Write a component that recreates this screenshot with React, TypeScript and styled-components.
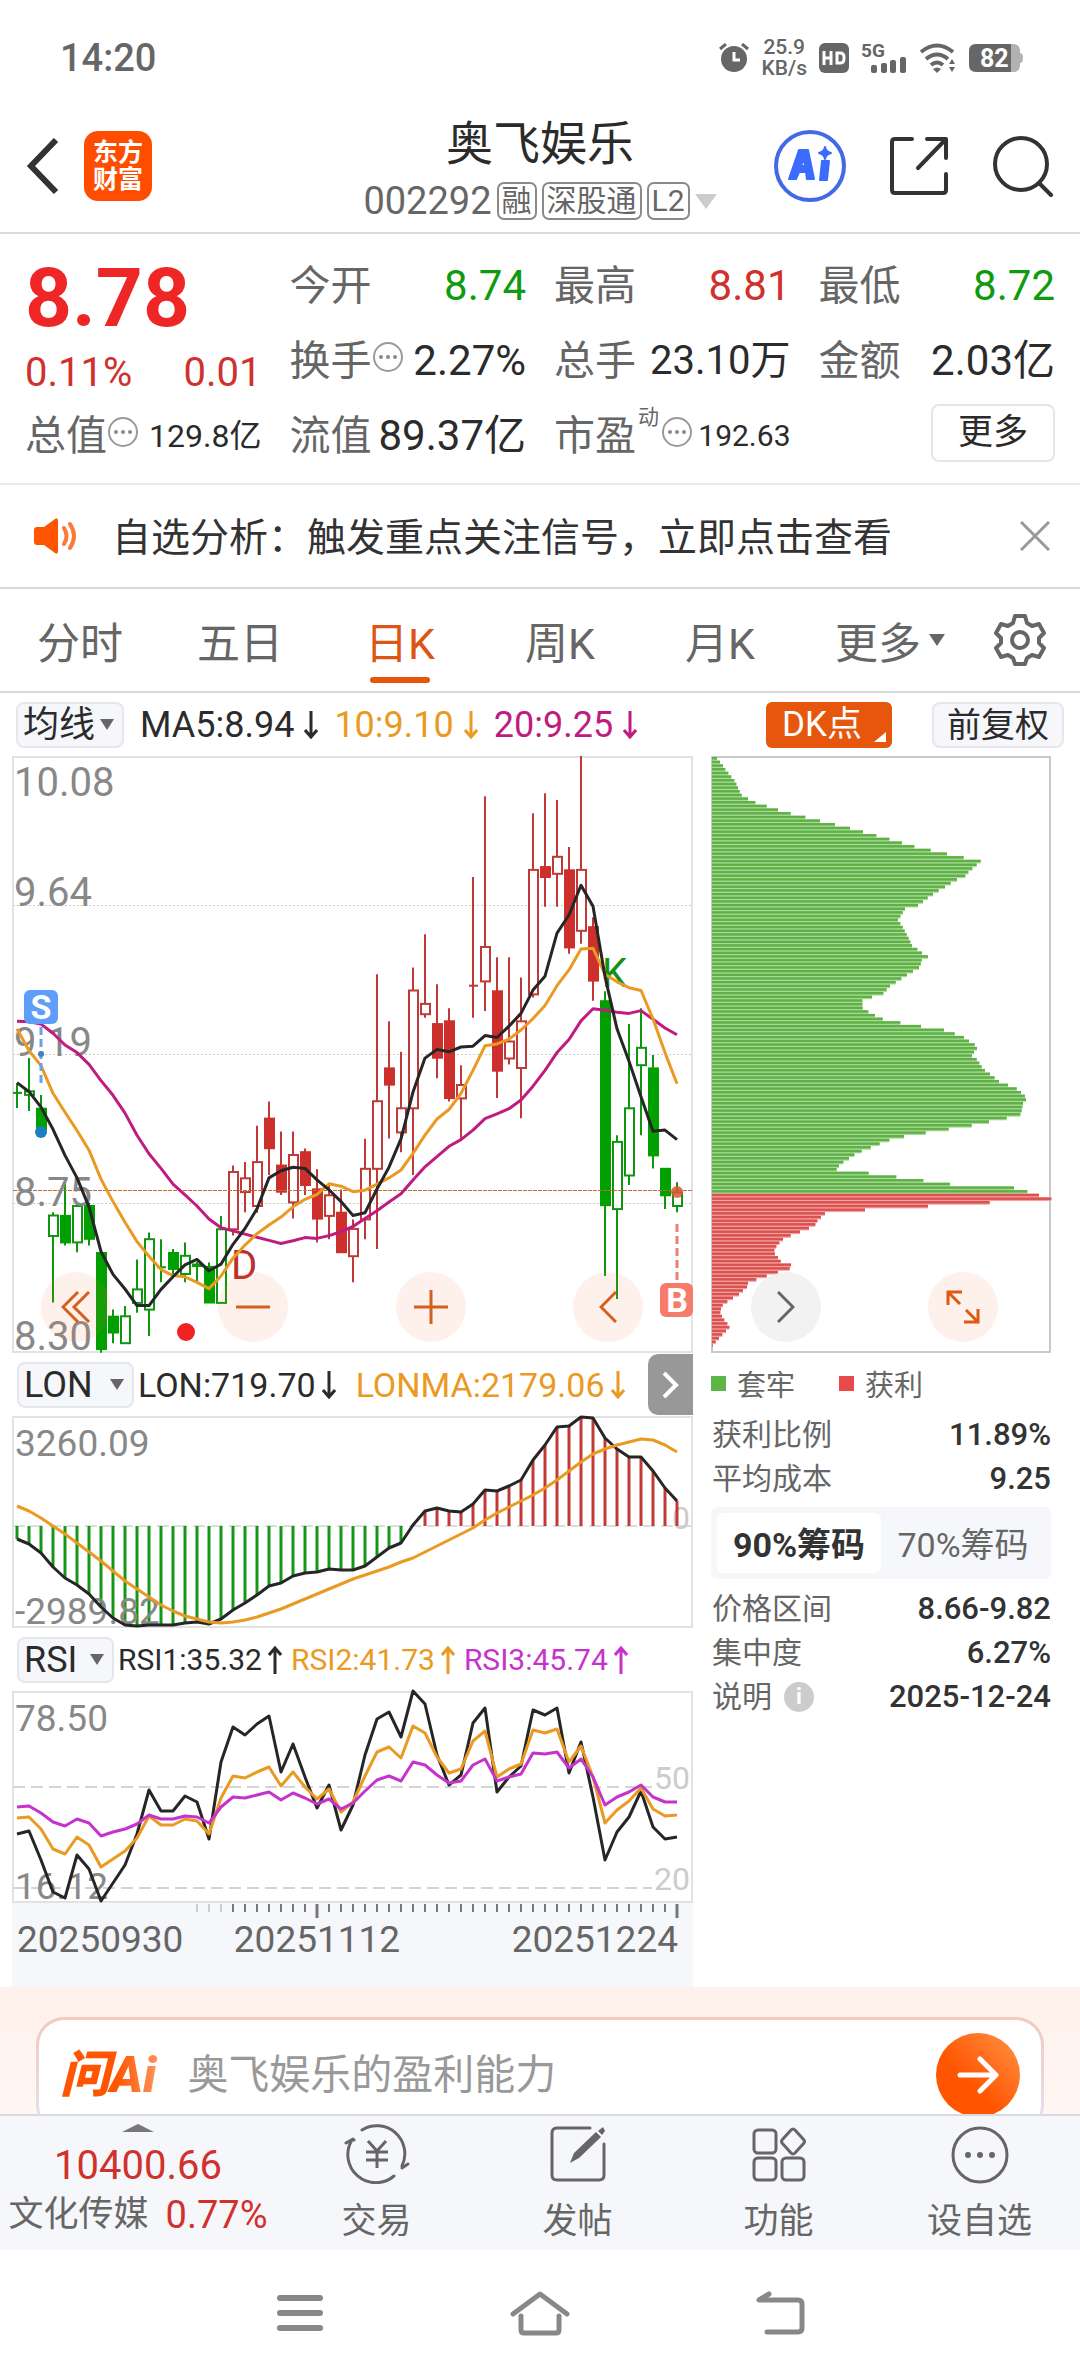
import React, { useState } from "react";
import styled, { createGlobalStyle } from "styled-components";

/* ---------- data ---------- */

type Candle = [kind: string, high: number, top: number, bottom: number, low: number];

// g/r: green or red, upper case: filled body. Levels are steps of the price axis, 40 = 10.08, 1547 = 8.30.
const candles: Candle[] = [
  ["g", 868, 892, 894, 930], ["g", 804, 888, 897, 938], ["G", 897, 932, 985, 995],
  ["g", 1194, 1202, 1254, 1422], ["G", 1118, 1203, 1270, 1278], ["g", 1170, 1178, 1270, 1295],
  ["G", 1170, 1178, 1261, 1278], ["G", 1297, 1297, 1540, 1549], ["G", 1440, 1458, 1498, 1525],
  ["g", 1431, 1457, 1525, 1525], ["g", 1313, 1389, 1423, 1448], ["g", 1245, 1262, 1440, 1507],
  ["g", 1262, 1333, 1335, 1371], ["G", 1287, 1297, 1337, 1352], ["g", 1270, 1304, 1350, 1371],
  ["g", 1320, 1326, 1330, 1371], ["G", 1321, 1332, 1422, 1422], ["g", 1203, 1237, 1423, 1423],
  ["r", 1076, 1092, 1237, 1253], ["r", 1067, 1108, 1143, 1194], ["r", 975, 1067, 1178, 1195],
  ["R", 914, 957, 1032, 1100], ["R", 990, 1076, 1142, 1150], ["r", 990, 1049, 1169, 1210],
  ["R", 1033, 1042, 1125, 1150], ["R", 1085, 1136, 1210, 1270], ["r", 1125, 1151, 1203, 1262],
  ["R", 1136, 1195, 1295, 1295], ["r", 1212, 1236, 1305, 1371], ["r", 1008, 1084, 1212, 1262],
  ["r", 592, 913, 1084, 1287], ["R", 711, 830, 871, 1007], ["r", 788, 931, 992, 1042],
  ["r", 575, 633, 931, 1100], ["r", 491, 667, 693, 702], ["R", 617, 718, 803, 855],
  ["R", 678, 711, 905, 914], ["r", 822, 872, 906, 1007], ["r", 346, 621, 623, 702],
  ["r", 142, 523, 610, 685], ["R", 549, 635, 836, 905], ["r", 549, 762, 805, 820],
  ["r", 600, 711, 829, 956], ["r", 185, 328, 643, 651], ["R", 134, 321, 346, 421],
  ["r", 151, 295, 338, 421], ["R", 270, 329, 524, 540], ["r", 40, 328, 482, 515],
  ["R", 448, 473, 608, 659], ["G", 635, 660, 1176, 1355], ["g", 999, 1016, 1186, 1413],
  ["g", 718, 931, 1101, 1125], ["g", 678, 778, 822, 999], ["G", 796, 830, 1050, 1083],
  ["G", 1082, 1084, 1151, 1186], ["g", 1118, 1144, 1178, 1194],
];

const ma5 = [
  866, 889, 928, 984, 1050, 1107, 1180, 1293, 1351, 1388, 1430, 1430, 1389, 1357, 1327, 1313, 1342, 1325, 1275,
  1235, 1185, 1107, 1089, 1080, 1083, 1112, 1137, 1167, 1202, 1195, 1135, 1080, 1008, 890, 804, 782, 788, 776,
  774, 747, 752, 723, 691, 632, 597, 488, 442, 367, 420, 598, 730, 812, 902, 989, 986, 1010,
];
const ma10 = [
  730, 785, 823, 893, 941, 987, 1037, 1110, 1167, 1219, 1268, 1305, 1339, 1354, 1357, 1371, 1387, 1355, 1310,
  1277, 1248, 1226, 1206, 1180, 1161, 1149, 1122, 1128, 1142, 1138, 1123, 1107, 1087, 1045, 999, 958, 934, 893,
  835, 773, 768, 756, 733, 704, 671, 621, 581, 528, 526, 592, 611, 626, 633, 705, 790, 869,
];
const ma20 = [
  711, 712, 718, 741, 771, 790, 820, 861, 898, 943, 999, 1046, 1083, 1123, 1150, 1178, 1211, 1233, 1241, 1249,
  1257, 1265, 1273, 1266, 1258, 1260, 1253, 1243, 1230, 1210, 1190, 1168, 1147, 1112, 1079, 1053, 1027, 1010,
  986, 957, 945, 932, 910, 875, 835, 790, 757, 710, 679, 683, 688, 691, 684, 706, 728, 745,
];

const lon = [
  568, 582, 610, 650, 684, 706, 733, 772, 803, 826, 828, 826, 826, 825, 820, 815, 822, 807, 779, 758, 734, 708,
  698, 677, 668, 665, 657, 660, 660, 647, 620, 594, 580, 525, 483, 473, 482, 486, 462, 420, 423, 407, 389, 330,
  285, 232, 228, 201, 204, 265, 297, 321, 321, 364, 413, 452,
];
const lonMa = [
  467, 482, 504, 527, 552, 579, 605, 634, 664, 692, 718, 742, 764, 783, 797, 808, 816, 819, 817, 811, 802, 790,
  778, 763, 748, 733, 717, 701, 688, 675, 662, 650, 637, 623, 605, 588, 571, 553, 533, 510, 490, 472, 454, 434,
  415, 390, 364, 336, 312, 296, 286, 276, 266, 270, 285, 305,
];

const rsi1 = [
  613, 604, 690, 785, 805, 675, 717, 814, 760, 705, 612, 480, 543, 543, 499, 517, 628, 395, 292, 314, 283, 259,
  427, 341, 440, 535, 464, 601, 525, 375, 267, 246, 322, 184, 222, 375, 464, 435, 280, 235, 487, 440, 407, 240,
  254, 235, 430, 335, 500, 691, 605, 560, 484, 590, 626, 622,
];
const rsi2 = [
  564, 561, 598, 656, 671, 622, 645, 711, 687, 663, 625, 559, 585, 585, 566, 572, 611, 505, 438, 445, 426, 411,
  469, 427, 470, 508, 476, 545, 515, 437, 366, 352, 385, 289, 309, 380, 429, 418, 332, 304, 440, 417, 403, 300,
  308, 297, 395, 347, 440, 580, 540, 514, 475, 537, 558, 555,
];
const rsi3 = [
  530, 529, 548, 577, 587, 567, 578, 617, 607, 598, 582, 554, 566, 566, 557, 561, 578, 531, 500, 503, 494, 486,
  509, 488, 504, 521, 508, 536, 519, 484, 449, 439, 452, 397, 405, 436, 458, 452, 405, 387, 454, 440, 432, 370,
  373, 367, 414, 387, 440, 524, 500, 487, 466, 502, 517, 516,
];

// Holdings per price level, from 10.08 down to 8.30.
const chips = [
  15, 24, 33, 40, 49, 58, 67, 73, 78, 83, 89, 108, 130, 164, 198, 236, 280, 324, 369, 414, 453, 493, 532, 570,
  607, 656, 705, 755, 806, 794, 781, 769, 760, 735, 716, 699, 680, 663, 647, 633, 618, 579, 572, 565, 558, 565,
  572, 578, 584, 590, 595, 600, 616, 630, 648, 629, 626, 621, 603, 585, 568, 551, 534, 524, 514, 480, 451, 451,
  452, 469, 489, 512, 565, 627, 696, 728, 756, 771, 788, 795, 786, 780, 794, 802, 809, 819, 834, 848, 861, 888,
  914, 927, 939, 942, 933, 931, 929, 925, 884, 831, 779, 710, 641, 576, 532, 503, 476, 449, 427, 411, 394, 381,
  374, 470, 553, 634, 714, 906, 946, 981, 1018, 833, 648, 459, 339, 327, 316, 310, 291, 264, 236, 213, 202, 193,
  187, 189, 198, 206, 237, 233, 198, 164, 133, 108, 105, 93, 81, 63, 46, 32, 27, 25, 30, 37, 46, 52, 42, 31, 21,
  11, 2,
];
const FIRST_PROFIT_LEVEL = 119;

const xOf = (i: number) => 5 + i * 12;
const priceY = (v: number) => Math.round(((v - 40) / 2.529) * 10) / 10;
const lonY = (v: number) => Math.round((v - 198) / 3);
const rsiY = (v: number) => Math.round((v - 183) / 3);
const points = (values: number[], y: (v: number) => number) => values.map((v, i) => `${xOf(i)},${y(v)}`).join(" ");

/* ---------- colours and base ---------- */

const c = {
  ink: "#2b2b2b",
  text: "#666666",
  faint: "#888888",
  line: "#dadada",
  frame: "#e2e2e2",
  red: "#d0312d",
  green: "#0f9a0f",
  brand: "#e6560c",
  orange: "#ea9a22",
  magenta: "#c01c80",
  violet: "#c633cc",
  panel: "#f6f7fa",
};

const Global = createGlobalStyle`
  * { box-sizing: border-box; }
  body {
    margin: 0;
    background: #fff;
    color: ${c.ink};
    font-family: Roboto, "Noto Sans CJK SC", sans-serif;
  }
  button, select, input { font: inherit; color: inherit; margin: 0; padding: 0; border: 0; background: none; }
  button, select { cursor: pointer; }
  svg { display: block; }
  svg text { font-family: Roboto, "Noto Sans CJK SC", sans-serif; }
`;

const Page = styled.div`
  display: flex;
  flex-direction: column;
`;

/* ---------- status bar ---------- */

const StatusBar = styled.div`
  display: flex;
  align-items: center;
  justify-content: space-between;
  height: 116px;
  padding: 0 56px 0 60px;
  color: ${c.text};
`;
const Clock = styled.time`
  font-size: 38px;
  font-weight: 500;
`;
const StatusIcons = styled.div`
  display: flex;
  align-items: center;
  gap: 12px;
`;
const NetSpeed = styled.div`
  font-size: 21px;
  line-height: 21px;
  font-weight: 500;
  text-align: center;
`;

/* ---------- header ---------- */

const Header = styled.header`
  display: grid;
  grid-template-columns: 1fr auto 1fr;
  align-items: center;
  height: 118px;
  padding: 0 26px;
  border-bottom: 2px solid ${c.line};
`;
const HeaderSide = styled.div<{ $end?: boolean }>`
  display: flex;
  align-items: center;
  gap: ${(p) => (p.$end ? 43 : 24)}px;
  justify-content: ${(p) => (p.$end ? "flex-end" : "flex-start")};
  padding-bottom: 16px;
`;
const IconButton = styled.button`
  display: flex;
  align-items: center;
  justify-content: center;
`;
const AppLogo = styled.a`
  display: block;
  width: 68px;
  height: 70px;
  padding-top: 8px;
  border-radius: 14px;
  background: #ff4d00;
  color: #fff;
  font-size: 25px;
  line-height: 27px;
  font-weight: 700;
  text-align: center;
  text-decoration: none;
`;
const TitleBlock = styled.div`
  display: flex;
  flex-direction: column;
  align-items: center;
  gap: 10px;
  padding-bottom: 12px;
`;
const Title = styled.h1`
  margin: 0;
  font-size: 47px;
  line-height: 56px;
  font-weight: 400;
`;
const CodeRow = styled.div`
  display: flex;
  align-items: center;
  gap: 5px;
  color: ${c.text};
  font-size: 38px;
  line-height: 38px;
`;
const Tag = styled.span`
  height: 38px;
  padding: 0 3px;
  border: 2px solid #8a8a8a;
  border-radius: 7px;
  font-size: 30px;
  line-height: 33px;
`;
const Caret = styled.span<{ $size?: number; $color?: string; $up?: boolean }>`
  flex: none;
  width: 0;
  height: 0;
  border: ${(p) => p.$size ?? 8}px solid transparent;
  border-top: ${(p) => (p.$up ? 0 : (p.$size ?? 8) + 4)}px solid ${(p) => p.$color ?? c.text};
  border-bottom: ${(p) => (p.$up ? (p.$size ?? 8) - 8 : 0)}px solid ${(p) => p.$color ?? c.text};
`;

/* ---------- quote ---------- */

const Quote = styled.section`
  display: grid;
  grid-template-columns: repeat(4, 1fr);
  grid-auto-rows: 75px;
  column-gap: 28px;
  padding: 14px 25px 10px;
  border-bottom: 2px solid #ececec;
`;
const PriceCell = styled.div`
  grid-row: span 2;
  color: ${c.red};
`;
const Price = styled.div`
  color: #ee2626;
  font-size: 82px;
  line-height: 100px;
  font-weight: 700;
`;
const Change = styled.div`
  display: flex;
  justify-content: space-between;
  font-size: 40px;
  line-height: 50px;
`;
const Field = styled.div`
  display: flex;
  align-items: center;
  white-space: nowrap;
`;
const FieldLabel = styled.span`
  color: ${c.text};
  font-size: 41px;
  line-height: 48px;
`;
const FieldValue = styled.span<{ $tone?: string; $size?: number }>`
  margin-left: auto;
  color: ${(p) => p.$tone ?? c.ink};
  font-size: ${(p) => p.$size ?? 42}px;
  line-height: 48px;
`;
const Superscript = styled.sup`
  align-self: flex-start;
  padding: 6px 2px 0;
  color: ${c.text};
  font-size: 21px;
  line-height: 26px;
`;
const MoreButton = styled.button`
  align-self: flex-start;
  width: 124px;
  height: 58px;
  margin: 6px 0 0 auto;
  border: 2px solid #e6e6e6;
  border-radius: 8px;
  font-size: 35px;
  line-height: 48px;
`;

/* ---------- notice ---------- */

const Notice = styled.section`
  display: flex;
  align-items: center;
  height: 104px;
  padding: 0 30px 0 34px;
  border-bottom: 2px solid ${c.line};
`;
const NoticeText = styled.a`
  flex: 1;
  margin-left: 34px;
  padding-bottom: 4px;
  color: #333;
  font-size: 39px;
  text-decoration: none;
`;

/* ---------- period tabs ---------- */

const Tabs = styled.nav`
  display: flex;
  height: 104px;
  padding-right: 20px;
  border-bottom: 2px solid ${c.line};
`;
const Tab = styled.button<{ $active?: boolean; $grow?: number }>`
  position: relative;
  display: flex;
  flex: ${(p) => p.$grow ?? 16} 1 0;
  align-items: center;
  justify-content: center;
  gap: 8px;
  color: ${(p) => (p.$active ? "#dd5514" : c.text)};
  font-size: 43px;
  &::after {
    content: "";
    position: absolute;
    bottom: 8px;
    left: calc(50% - 30px);
    width: 60px;
    height: 6px;
    border-radius: 3px;
    background: ${(p) => (p.$active ? c.brand : "transparent")};
  }
`;

/* ---------- indicator rows ---------- */

const Row = styled.div<{ $top?: boolean }>`
  display: flex;
  align-items: center;
  height: 63px;
  padding: ${(p) => (p.$top ? "0 16px" : "0 0 0 5px")};
  white-space: nowrap;
`;
const Picker = styled.label<{ $width: number }>`
  display: flex;
  flex: none;
  align-items: center;
  justify-content: space-between;
  width: ${(p) => p.$width}px;
  height: 46px;
  padding: 0 8px 0 5px;
  border: 2px solid #e6e7ed;
  border-radius: 8px;
  background: ${c.panel};
`;
const PickerSelect = styled.select`
  appearance: none;
  font-size: 36px;
  line-height: 42px;
  outline: none;
`;
const Reading = styled.span<{ $tone: string; $size: number; $gap?: number; $arrowGap?: number }>`
  display: flex;
  align-items: center;
  gap: ${(p) => p.$arrowGap ?? 6}px;
  margin-left: ${(p) => p.$gap ?? 16}px;
  color: ${(p) => p.$tone};
  font-size: ${(p) => p.$size}px;
`;
const TopRight = styled.div`
  display: flex;
  gap: 40px;
  margin-left: auto;
`;
const DkButton = styled.button`
  position: relative;
  width: 126px;
  height: 46px;
  padding-right: 14px;
  border-radius: 6px;
  background: ${c.brand};
  color: #fff;
  font-size: 35px;
  line-height: 46px;
  &::after {
    content: "";
    position: absolute;
    right: 6px;
    bottom: 6px;
    border-left: 12px solid transparent;
    border-bottom: 10px solid #fff;
  }
`;
const AdjustButton = styled.button`
  width: 132px;
  height: 46px;
  border: 2px solid #e6e7ed;
  border-radius: 8px;
  background: ${c.panel};
  font-size: 34px;
  line-height: 42px;
`;
const NextButton = styled.button`
  display: flex;
  align-items: center;
  justify-content: center;
  width: 45px;
  height: 61px;
  margin-left: auto;
  border-radius: 10px 0 0 10px;
  background: #989898;
`;

/* ---------- charts ---------- */

const ChartArea = styled.section`
  position: relative;
  display: grid;
  grid-template-columns: 681fr 340fr;
  gap: 18px;
  margin: 0 29px 0 12px;
`;
const Column = styled.div`
  display: flex;
  flex-direction: column;
  min-width: 0;
`;
const Plot = styled.svg`
  width: 100%;
  height: auto;
  overflow: visible;
`;
const DateAxis = styled.div`
  background: ${c.panel};
`;
const ChartControls = styled.div`
  position: absolute;
  top: 516px;
  left: 29px;
  right: 53px;
  display: flex;
  justify-content: space-between;
`;
const RoundButton = styled.button<{ $grey?: boolean }>`
  display: flex;
  align-items: center;
  justify-content: center;
  width: 70px;
  height: 70px;
  border-radius: 50%;
  background: ${(p) => (p.$grey ? "rgba(235, 235, 235, 0.65)" : "rgba(250, 120, 60, 0.11)")};
`;

/* ---------- chip panel ---------- */

const Legend = styled.div`
  display: flex;
  align-items: center;
  gap: 44px;
  height: 60px;
  color: ${c.text};
  font-size: 29px;
`;
const LegendItem = styled.span<{ $tone: string }>`
  display: flex;
  align-items: center;
  gap: 11px;
  &::before {
    content: "";
    width: 15px;
    height: 15px;
    background: ${(p) => p.$tone};
  }
`;
const Stats = styled.dl`
  margin: 0;
  padding: 0 0 0 1px;
`;
const Stat = styled.div`
  display: flex;
  justify-content: space-between;
  height: 44px;
  font-size: 30px;
  line-height: 44px;
  dt {
    display: flex;
    align-items: center;
    gap: 12px;
    color: ${c.text};
  }
  dd {
    margin: 0;
    color: #333;
    font-size: 31px;
    font-weight: 500;
  }
`;
const InfoBadge = styled.button`
  width: 30px;
  height: 30px;
  border-radius: 50%;
  background: #cccccc;
  color: #fff;
  font-size: 22px;
  line-height: 30px;
  font-weight: 700;
`;
const Segments = styled.div`
  display: flex;
  height: 72px;
  margin: 6px 0 8px;
  padding: 6px;
  border-radius: 6px;
  background: ${c.panel};
`;
const Segment = styled.button<{ $active: boolean }>`
  flex: 1;
  padding-bottom: 2px;
  border-radius: 6px;
  background: ${(p) => (p.$active ? "#fff" : "transparent")};
  color: ${(p) => (p.$active ? "#333" : c.text)};
  font-size: 34px;
  font-weight: ${(p) => (p.$active ? 700 : 400)};
  white-space: nowrap;
`;

/* ---------- assistant ---------- */

const Assistant = styled.section`
  height: 127px;
  padding: 30px 36px 0;
  overflow: hidden;
  background: linear-gradient(#fff1ec, #fff6f2);
`;
const AskCard = styled.form`
  padding: 3px;
  border-radius: 28px;
  background: linear-gradient(#f5c8be, #e3dfec 100px);
`;
const AskInner = styled.div`
  display: flex;
  align-items: center;
  height: 110px;
  padding: 0 21px;
  border-radius: 25px;
  background: #fff;
`;
const AskLogo = styled.label`
  padding-right: 6px;
  background: linear-gradient(90deg, #ff5500 55%, #ff9a66);
  background-clip: text;
  color: transparent;
  font-size: 50px;
  line-height: 56px;
  font-weight: 900;
  font-style: italic;
`;
const AskInput = styled.input`
  flex: 1;
  min-width: 0;
  margin-left: 25px;
  font-size: 41px;
  outline: none;
  &::placeholder {
    color: #999;
    opacity: 1;
  }
`;
const AskButton = styled.button`
  display: flex;
  align-items: center;
  justify-content: center;
  width: 84px;
  height: 84px;
  border-radius: 50%;
  background: linear-gradient(45deg, #ff5500 40%, #ff9448);
`;

/* ---------- bottom bars ---------- */

const BottomBar = styled.nav`
  display: flex;
  height: 136px;
  border-top: 2px solid #d8dae0;
  background: ${c.panel};
`;
const IndexButton = styled.button`
  display: flex;
  flex: 276 1 0;
  flex-direction: column;
  align-items: center;
  justify-content: flex-start;
  padding-top: 8px;
  color: ${c.red};
`;
const IndexValue = styled.span`
  margin-top: 9px;
  font-size: 40px;
  line-height: 50px;
`;
const IndexName = styled.span`
  display: flex;
  gap: 17px;
  color: ${c.red};
  font-size: 38px;
  line-height: 48px;
  white-space: nowrap;
`;
const IndexLabel = styled.span`
  color: ${c.text};
  font-size: 35px;
`;
const BarButton = styled.button`
  display: flex;
  flex: 201 1 0;
  flex-direction: column;
  align-items: center;
  gap: 14px;
  padding-top: 8px;
  color: ${c.text};
  font-size: 35px;
  line-height: 48px;
`;
const SystemBar = styled.nav`
  display: flex;
  justify-content: center;
  gap: 180px;
  height: 126px;
`;
const SystemButton = styled.button`
  display: flex;
  align-items: center;
  justify-content: center;
  width: 60px;
`;

/* ---------- small drawings ---------- */

const Dots = () => (
  <svg width="32" height="40" viewBox="0 0 32 40" fill="none" stroke="#9a9a9a" strokeWidth="2">
    <circle cx="16" cy="16" r="14" />
    <g fill="#8a8a8a" stroke="none">
      <circle cx="9" cy="16" r="2" />
      <circle cx="16" cy="16" r="2" />
      <circle cx="23" cy="16" r="2" />
    </g>
  </svg>
);

const Arrow = ({ up }: { up?: boolean }) => (
  <svg width="14" height="28" viewBox="0 0 14 28" fill="none" stroke="currentColor" strokeWidth="3">
    {up ? <path d="M7 28V2M1 9l6-7 6 7" /> : <path d="M7 0v26M1 19l6 7 6-7" />}
  </svg>
);

const StatusGlyphs = () => (
  <StatusIcons>
    <svg width="30" height="30" viewBox="0 0 30 30" fill={c.text}>
      <circle cx="15" cy="16" r="13" />
      <path d="M1 6l6-5M29 6l-6-5" stroke={c.text} strokeWidth="3" />
      <path d="M15 9v8h6" fill="none" stroke="#fff" strokeWidth="3" />
    </svg>
    <NetSpeed>25.9<br />KB/s</NetSpeed>
    <svg width="30" height="30" viewBox="0 0 30 30">
      <rect width="30" height="30" rx="6" fill={c.text} />
      <path d="M5 8v14M12 8v14M5 15h7M18 10h3q4 0 4 4v2q0 4-4 4h-3z" fill="none" stroke="#fff" strokeWidth="3" />
    </svg>
    <svg width="46" height="38" viewBox="0 0 46 38" fill={c.text}>
      <text x="0" y="18" fontSize="19" fontWeight="700">5G</text>
      <rect x="10" y="26" width="6" height="8" rx="2" />
      <rect x="20" y="24" width="6" height="10" rx="2" />
      <rect x="29" y="21" width="6" height="13" rx="2" />
      <rect x="39" y="18" width="6" height="16" rx="2" />
    </svg>
    <svg width="38" height="30" viewBox="0 0 38 30" fill="none" stroke={c.text} strokeWidth="4">
      <path d="M2 9q16-13 32 0M7 16q11-9 22 0M12 22q6-5 12 0" />
      <path d="M14 26q4-3 8 0l-4 4zM30 21l3-5 3 5zM30 24l3 5 3-5z" fill={c.text} stroke="none" />
    </svg>
    <svg width="55" height="28" viewBox="0 0 55 28">
      <path d="M42 0h2q7 0 7 7v2q3 0 3 5t-3 5v2q0 7-7 7h-2z" fill="#b2b2b2" />
      <path d="M7 0h35v28H7q-7 0-7-7V7q0-7 7-7z" fill={c.text} />
      <text x="11" y="23" fontSize="25" fontWeight="700" fill="#fff">82</text>
    </svg>
  </StatusIcons>
);

const PriceChart = () => (
  <Plot viewBox="0 0 681 597" role="img" aria-label="日K">
    <rect x="1" y="1" width="679" height="595" fill="#fff" stroke={c.frame} strokeWidth="2" />
    <g stroke="#cccccc" strokeDasharray="2 2">
      <path d="M1 149.500H680M1 298.500H680M1 447.500H680" />
    </g>
    {candles.map(([kind, high, top, bottom, low], i) => {
      const tone = kind.toLowerCase() === "g" ? "#0f960f" : "#bf3a36";
      const fill = kind === "G" ? "#00a000" : kind === "R" ? "#cc2f2c" : "#fff";
      const [yh, yt, yb, yl] = [high, top, bottom, low].map(priceY);
      return (
        <g key={i} stroke={tone} strokeWidth="2">
          <path d={`M${xOf(i)} ${yh}V${yl}`} />
          {bottom - top < 4 ? (
            <path d={`M${xOf(i) - 4} ${yt}h9`} />
          ) : (
            <rect x={xOf(i) - 4} y={yt} width="9" height={yb - yt} fill={fill} stroke={fill === "#fff" ? tone : fill} />
          )}
        </g>
      );
    })}
    <path d="M1 434.500H680" stroke="#c96a35" strokeDasharray="4 1" />
    <text x="219" y="523" fontSize="40" fill="#bb2f2c">D</text>
    <text x="590" y="231" fontSize="40" fill="#129112">K</text>
    <g fill={c.faint} fontSize="40">
      <text x="2" y="40">10.08</text>
      <text x="2" y="150">9.64</text>
      <text x="2" y="300">9.19</text>
      <text x="2" y="450">8.75</text>
      <text x="2" y="594">8.30</text>
    </g>
    <g fill="none" strokeWidth="3" strokeLinejoin="round">
      <polyline points={points(ma20, priceY)} stroke={c.magenta} />
      <polyline points={points(ma10, priceY)} stroke={c.orange} />
      <polyline points={points(ma5, priceY)} stroke="#262626" />
    </g>
    <rect x="12" y="234" width="34" height="34" rx="6" fill="#5e9ef8" />
    <text x="29" y="263" fontSize="34" fontWeight="700" fill="#fff" textAnchor="middle">S</text>
    <path d="M29 271v56" stroke="#6ca0e6" strokeWidth="3" strokeDasharray="8 4" />
    <circle cx="29" cy="298" r="3" fill="#4a7cc0" />
    <circle cx="29" cy="376" r="6" fill="#1c80c0" />
    <circle cx="174" cy="576" r="9" fill="#f02222" />
    <circle cx="665" cy="436" r="6" fill="#dc5636" opacity="0.85" />
    <path d="M665 468v58" stroke="#e88074" strokeWidth="3" strokeDasharray="8 4" />
    <rect x="648" y="527" width="33" height="34" rx="6" fill="#f77b6a" />
    <text x="665" y="556" fontSize="34" fontWeight="700" fill="#fff" textAnchor="middle">B</text>
  </Plot>
);

const LonChart = () => (
  <Plot viewBox="0 0 681 212" role="img" aria-label="LON">
    <rect x="1" y="1" width="679" height="210" fill="#fff" stroke={c.frame} strokeWidth="2" />
    <path d="M1 110H680" stroke="#dddddd" strokeWidth="2" strokeDasharray="12 6" />
    <text x="678" y="113" fontSize="32" fill="#cccccc" textAnchor="end">0</text>
    {lon.map((v, i) => (
      <path key={i} d={`M${xOf(i)} 110V${lonY(v)}`} stroke={v > 527 ? "#169616" : "#c23a36"} strokeWidth="3" />
    ))}
    <g fill={c.faint} fontSize="37">
      <text x="3" y="40">3260.09</text>
      <text x="3" y="208">-2989.82</text>
    </g>
    <g fill="none" strokeWidth="3" strokeLinejoin="round">
      <polyline points={points(lon, lonY)} stroke="#262626" />
      <polyline points={points(lonMa, lonY)} stroke={c.orange} />
    </g>
  </Plot>
);

const RsiChart = () => (
  <Plot viewBox="0 0 681 212" role="img" aria-label="RSI">
    <rect x="1" y="1" width="679" height="210" fill="#fff" stroke={c.frame} strokeWidth="2" />
    <path d="M1 96H640M1 197H640" stroke="#d4d4d4" strokeWidth="2" strokeDasharray="12 6" />
    <g fill="#cccccc" fontSize="32" textAnchor="end">
      <text x="678" y="98">50</text>
      <text x="678" y="199">20</text>
    </g>
    <g fill={c.faint} fontSize="37">
      <text x="3" y="40">78.50</text>
      <text x="3" y="208">16.12</text>
    </g>
    <g fill="none" strokeWidth="3" strokeLinejoin="round">
      <polyline points={points(rsi1, rsiY)} stroke="#262626" />
      <polyline points={points(rsi2, rsiY)} stroke={c.orange} />
      <polyline points={points(rsi3, rsiY)} stroke={c.violet} />
    </g>
  </Plot>
);

const AxisDrawing = () => (
  <Plot viewBox="0 0 681 84" role="img" aria-label="日期">
    {Array.from({ length: 41 }, (_, k) => k + 15).map((i) => {
      const major = i === 25 || i === 55;
      return (
        <path
          key={i}
          d={`M${xOf(i)} 1V${major ? 15 : 9}`}
          stroke={i < 18 ? "#cccccc" : "#777777"}
          strokeWidth={major ? 3 : 2}
        />
      );
    })}
    <g fill={c.text} fontSize="37">
      <text x="5" y="49">20250930</text>
      <text x="305" y="49" textAnchor="middle">20251112</text>
      <text x="666" y="49" textAnchor="end">20251224</text>
    </g>
  </Plot>
);

const ChipChart = () => (
  <Plot viewBox="0 0 340 597" role="img" aria-label="筹码分布">
    <rect x="1" y="1" width="338" height="595" fill="#fff" stroke="#c9c9c9" strokeWidth="2" />
    {chips.map((w, n) => {
      const profit = n >= FIRST_PROFIT_LEVEL;
      const y = 1 + n * 3.67;
      return (
        <g key={n}>
          <rect x="1" y={y} width={w / 3} height="3.67" fill={profit ? "#f7a09c" : "#a9dc98"} />
          <rect x="1" y={y} width={w / 3} height="2.5" fill={profit ? "#d95252" : "#5fb046"} />
        </g>
      );
    })}
  </Plot>
);

/* ---------- page ---------- */

const tabs = ["分时", "五日", "日K", "周K", "月K"];

export default function App() {
  const [tab, setTab] = useState("日K");
  const [share, setShare] = useState("90%");

  return (
    <Page>
      <Global />
      <StatusBar>
        <Clock>14:20</Clock>
        <StatusGlyphs />
      </StatusBar>

      <Header>
        <HeaderSide>
          <IconButton aria-label="返回">
            <svg width="34" height="56" viewBox="0 0 34 56" fill="none" stroke="#333" strokeWidth="6">
              <path d="M30 2L5 28l25 26" />
            </svg>
          </IconButton>
          <AppLogo href="#home">东方<br />财富</AppLogo>
        </HeaderSide>
        <TitleBlock>
          <Title>奥飞娱乐</Title>
          <CodeRow>
            002292
            <Tag>融</Tag>
            <Tag>深股通</Tag>
            <Tag>L2</Tag>
            <Caret $size={11} $color="#cccccc" />
          </CodeRow>
        </TitleBlock>
        <HeaderSide $end>
          <IconButton aria-label="AI">
            <svg width="72" height="72" viewBox="0 0 72 72">
              <circle cx="36" cy="36" r="34" fill="none" stroke="#4169e8" strokeWidth="4" />
              <path
                fill="#3b6cff"
                fillRule="evenodd"
                stroke="#3b6cff"
                strokeWidth="2"
                strokeLinejoin="round"
                d="M25 20h9l6 29h-7l-1-7h-7l-3 7h-7zM27 36h4l-1-8z"
              />
              <path
                fill="#3b6cff"
                stroke="#3b6cff"
                strokeWidth="2"
                strokeLinejoin="round"
                d="M48 31h7l-2 19h-7zM51 17q1 5 6 6-5 1-6 6-1-5-6-6 5-1 6-6z"
              />
            </svg>
          </IconButton>
          <IconButton aria-label="分享">
            <svg width="60" height="60" viewBox="0 0 60 60" fill="none" stroke="#333" strokeWidth="4" strokeLinecap="round" strokeLinejoin="round">
              <path d="M23 3H6q-3 0-3 3v48q0 3 3 3h48q3 0 3-3V38M38 3h19v19M57 3L29 32" />
            </svg>
          </IconButton>
          <IconButton aria-label="搜索">
            <svg width="62" height="62" viewBox="0 0 62 62" fill="none" stroke="#333" strokeWidth="4" strokeLinecap="round">
              <circle cx="29" cy="29" r="26" />
              <path d="M47 48l12 12" />
            </svg>
          </IconButton>
        </HeaderSide>
      </Header>

      <Quote>
        <PriceCell>
          <Price>8.78</Price>
          <Change>
            <span>0.11%</span>
            <span>0.01</span>
          </Change>
        </PriceCell>
        <Field>
          <FieldLabel>今开</FieldLabel>
          <FieldValue $tone={c.green}>8.74</FieldValue>
        </Field>
        <Field>
          <FieldLabel>最高</FieldLabel>
          <FieldValue $tone={c.red}>8.81</FieldValue>
        </Field>
        <Field>
          <FieldLabel>最低</FieldLabel>
          <FieldValue $tone={c.green}>8.72</FieldValue>
        </Field>
        <Field>
          <FieldLabel>换手</FieldLabel>
          <Dots />
          <FieldValue>2.27%</FieldValue>
        </Field>
        <Field>
          <FieldLabel>总手</FieldLabel>
          <FieldValue $size={40}>23.10万</FieldValue>
        </Field>
        <Field>
          <FieldLabel>金额</FieldLabel>
          <FieldValue>2.03亿</FieldValue>
        </Field>
        <Field>
          <FieldLabel>总值</FieldLabel>
          <Dots />
          <FieldValue $size={32}>129.8亿</FieldValue>
        </Field>
        <Field>
          <FieldLabel>流值</FieldLabel>
          <FieldValue>89.37亿</FieldValue>
        </Field>
        <Field>
          <FieldLabel>市盈</FieldLabel>
          <Superscript>动</Superscript>
          <Dots />
          <FieldValue $size={30}>192.63</FieldValue>
        </Field>
        <Field>
          <MoreButton>更多</MoreButton>
        </Field>
      </Quote>

      <Notice>
        <svg width="44" height="36" viewBox="0 0 44 36" fill="#ff5500">
          <path d="M3 9h7L21 1q3-2 3 2v30q0 4-3 2l-11-8H3q-3 0-3-3V12q0-3 3-3z" />
          <path d="M30 10q5 8 0 16M36 6q8 12 0 24" fill="none" stroke="#ff7a38" strokeWidth="4" strokeLinecap="round" />
        </svg>
        <NoticeText href="#signal">自选分析：触发重点关注信号，立即点击查看</NoticeText>
        <IconButton aria-label="关闭">
          <svg width="30" height="30" viewBox="0 0 30 30" fill="none" stroke="#999" strokeWidth="3">
            <path d="M1 1l28 28M29 1L1 29" />
          </svg>
        </IconButton>
      </Notice>

      <Tabs>
        {tabs.map((name) => (
          <Tab key={name} $active={name === tab} onClick={() => setTab(name)}>
            {name}
          </Tab>
        ))}
        <Tab $grow={18}>
          更多
          <Caret $size={8} />
        </Tab>
        <Tab $grow={8} aria-label="设置">
          <svg width="54" height="54" viewBox="0 0 54 54" fill="none" stroke={c.text} strokeWidth="4" strokeLinejoin="round">
            <path d="M22 3h10l2 7 5 3 7-2 5 9-5 5v5l5 5-5 9-7-2-5 3-2 6H22l-2-6-5-3-7 2-5-9 5-5v-5l-5-5 5-9 7 2 5-3z" />
            <circle cx="27" cy="27" r="8" />
          </svg>
        </Tab>
      </Tabs>

      <Row $top>
        <Picker $width={108}>
          <PickerSelect aria-label="均线" defaultValue="均线">
            <option>均线</option>
          </PickerSelect>
          <Caret $size={7} />
        </Picker>
        <Reading $tone={c.ink} $size={36} $arrowGap={10}>MA5:8.94 <Arrow /></Reading>
        <Reading $tone={c.orange} $size={36} $arrowGap={10}>10:9.10 <Arrow /></Reading>
        <Reading $tone={c.magenta} $size={36} $arrowGap={10}>20:9.25 <Arrow /></Reading>
        <TopRight>
          <DkButton>DK点</DkButton>
          <AdjustButton>前复权</AdjustButton>
        </TopRight>
      </Row>

      <ChartArea>
        <Column>
          <PriceChart />
          <Row>
            <Picker $width={117}>
              <PickerSelect aria-label="副图指标一" defaultValue="LON">
                <option>LON</option>
              </PickerSelect>
              <Caret $size={7} />
            </Picker>
            <Reading $tone={c.ink} $size={34} $gap={4}>LON:719.70 <Arrow /></Reading>
            <Reading $tone={c.orange} $size={34} $gap={20}>LONMA:2179.06 <Arrow /></Reading>
            <NextButton aria-label="下一个">
              <svg width="18" height="28" viewBox="0 0 18 28" fill="none" stroke="#fff" strokeWidth="4">
                <path d="M2 2l12 12L2 26" />
              </svg>
            </NextButton>
          </Row>
          <LonChart />
          <Row>
            <Picker $width={97}>
              <PickerSelect aria-label="副图指标二" defaultValue="RSI">
                <option>RSI</option>
              </PickerSelect>
              <Caret $size={7} />
            </Picker>
            <Reading $tone={c.ink} $size={30} $gap={4}>RSI1:35.32 <Arrow up /></Reading>
            <Reading $tone={c.orange} $size={30} $gap={9}>RSI2:41.73 <Arrow up /></Reading>
            <Reading $tone={c.violet} $size={30} $gap={9}>RSI3:45.74 <Arrow up /></Reading>
          </Row>
          <RsiChart />
          <DateAxis>
            <AxisDrawing />
          </DateAxis>
        </Column>

        <Column>
          <ChipChart />
          <Legend>
            <LegendItem $tone="#5cb645">套牢</LegendItem>
            <LegendItem $tone="#e84a4a">获利</LegendItem>
          </Legend>
          <Stats>
            <Stat><dt>获利比例</dt><dd>11.89%</dd></Stat>
            <Stat><dt>平均成本</dt><dd>9.25</dd></Stat>
          </Stats>
          <Segments>
            <Segment $active={share === "90%"} onClick={() => setShare("90%")}>90%筹码</Segment>
            <Segment $active={share === "70%"} onClick={() => setShare("70%")}>70%筹码</Segment>
          </Segments>
          <Stats>
            <Stat><dt>价格区间</dt><dd>8.66-9.82</dd></Stat>
            <Stat><dt>集中度</dt><dd>6.27%</dd></Stat>
            <Stat><dt>说明 <InfoBadge>i</InfoBadge></dt><dd>2025-12-24</dd></Stat>
          </Stats>
        </Column>

        <ChartControls>
          <RoundButton aria-label="最早">
            <svg width="30" height="32" viewBox="0 0 30 32" fill="none" stroke="#d4601f" strokeWidth="3">
              <path d="M17 1L2 16l15 15M28 1L13 16l15 15" />
            </svg>
          </RoundButton>
          <RoundButton aria-label="缩小">
            <svg width="34" height="34" viewBox="0 0 34 34" stroke="#d4601f" strokeWidth="3">
              <path d="M0 17h34" />
            </svg>
          </RoundButton>
          <RoundButton aria-label="放大">
            <svg width="34" height="34" viewBox="0 0 34 34" stroke="#d4601f" strokeWidth="3">
              <path d="M0 17h34M17 0v34" />
            </svg>
          </RoundButton>
          <RoundButton aria-label="向前">
            <svg width="18" height="32" viewBox="0 0 18 32" fill="none" stroke="#d4601f" strokeWidth="3">
              <path d="M17 1L2 16l15 15" />
            </svg>
          </RoundButton>
          <RoundButton aria-label="向后" $grey>
            <svg width="18" height="32" viewBox="0 0 18 32" fill="none" stroke="#666" strokeWidth="3">
              <path d="M1 1l15 15L1 31" />
            </svg>
          </RoundButton>
          <RoundButton aria-label="全屏">
            <svg width="34" height="34" viewBox="0 0 34 34" fill="none" stroke="#dd5a14" strokeWidth="3">
              <path d="M2 15V2h14M2 2l12 12M32 19v13H18M32 32L20 20" />
            </svg>
          </RoundButton>
        </ChartControls>
      </ChartArea>

      <Assistant>
        <AskCard onSubmit={(e) => e.preventDefault()}>
          <AskInner>
            <AskLogo htmlFor="ask">问Ai</AskLogo>
            <AskInput id="ask" placeholder="奥飞娱乐的盈利能力" />
            <AskButton aria-label="提问">
              <svg width="42" height="38" viewBox="0 0 42 38" fill="none" stroke="#fff" strokeWidth="5" strokeLinecap="round" strokeLinejoin="round">
                <path d="M3 19h35M23 3l16 16-16 16" />
              </svg>
            </AskButton>
          </AskInner>
        </AskCard>
      </Assistant>

      <BottomBar>
        <IndexButton>
          <Caret $size={16} $up $color="#77777a" />
          <IndexValue>10400.66</IndexValue>
          <IndexName>
            <IndexLabel>文化传媒</IndexLabel>
            0.77%
          </IndexName>
        </IndexButton>
        <BarButton>
          <svg width="66" height="60" viewBox="0 0 66 60" fill="none" stroke={c.text} strokeWidth="3" strokeLinecap="round" strokeLinejoin="round">
            <path d="M18 6A28 28 0 0 1 58 42M50 52A28 28 0 0 1 8 16M2 19l7-4 1 1M58 44l6-4" />
            <path d="M24 17l9 10 9-10M33 27v17M22 28h22M22 36h22" strokeLinecap="butt" />
          </svg>
          交易
        </BarButton>
        <BarButton>
          <svg width="60" height="60" viewBox="0 0 60 60" fill="none" stroke={c.text} strokeWidth="3" strokeLinecap="round">
            <path d="M42 4H9Q4 4 4 9v42q0 5 5 5h42q5 0 5-5V20" />
            <path d="M22 39l4-10L48 8l5 5-22 21z" fill={c.text} stroke="none" />
            <path d="M50 7l5-4 2 4-3 4z" fill={c.text} stroke="none" />
          </svg>
          发帖
        </BarButton>
        <BarButton>
          <svg width="60" height="60" viewBox="0 0 60 60" fill="none" stroke={c.text} strokeWidth="3" strokeLinejoin="round">
            <rect x="5" y="6" width="22" height="23" rx="4" />
            <rect x="5" y="34" width="22" height="22" rx="4" />
            <rect x="33" y="34" width="22" height="22" rx="4" />
            <path d="M42 6q2-2 4 0l9 10q1 2 0 3l-9 10q-2 2-4 0l-9-10q-1-1 0-3z" />
          </svg>
          功能
        </BarButton>
        <BarButton>
          <svg width="60" height="60" viewBox="0 0 60 60" fill="none" stroke={c.text} strokeWidth="3">
            <circle cx="30" cy="31" r="27" />
            <g fill={c.text} stroke="none">
              <circle cx="18" cy="31" r="3" />
              <circle cx="30" cy="31" r="3" />
              <circle cx="42" cy="31" r="3" />
            </g>
          </svg>
          设自选
        </BarButton>
      </BottomBar>

      <SystemBar>
        <SystemButton aria-label="最近任务">
          <svg width="46" height="38" viewBox="0 0 46 38" stroke="#888" strokeWidth="6" strokeLinecap="round">
            <path d="M3 4h40M3 19h40M3 34h40" />
          </svg>
        </SystemButton>
        <SystemButton aria-label="主屏幕">
          <svg width="60" height="46" viewBox="0 0 60 46" fill="none" stroke="#888" strokeWidth="5" strokeLinecap="round" strokeLinejoin="round">
            <path d="M3 24L30 4l27 20M11 26v14q0 3 3 3h32q3 0 3-3V26" />
          </svg>
        </SystemButton>
        <SystemButton aria-label="返回上一级">
          <svg width="50" height="44" viewBox="0 0 50 44" fill="none" stroke="#888" strokeWidth="5" strokeLinecap="round" strokeLinejoin="round">
            <path d="M14 3L4 9h39q4 0 4 4v24q0 4-4 4H12" />
          </svg>
        </SystemButton>
      </SystemBar>
    </Page>
  );
}
